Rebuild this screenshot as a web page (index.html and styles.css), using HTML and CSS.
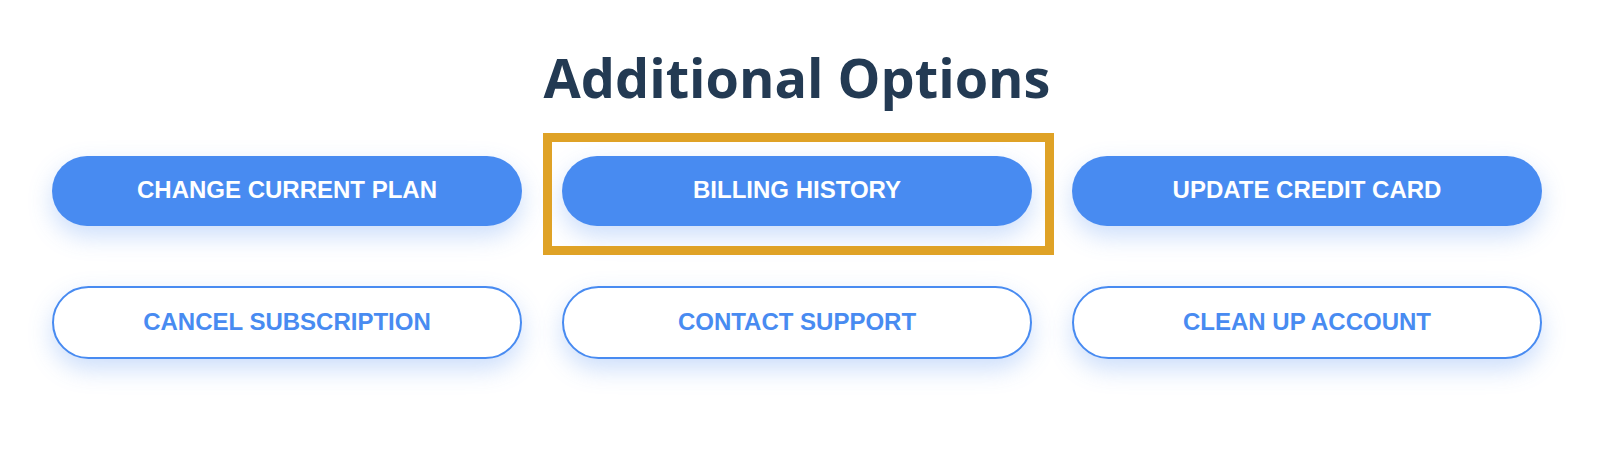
FILE: index.html
```html
<!DOCTYPE html>
<html>
<head>
    <title>Additional Options</title>
    <link rel="stylesheet" href="styles.css">
</head>
<body>
    <div class="options">
        <h1>Additional Options</h1>
        <div class="grid">
            <button class="btn btn-solid">Change Current Plan</button>
            <button class="btn btn-solid highlight">Billing History</button>
            <button class="btn btn-solid">Update Credit Card</button>
            <button class="btn btn-outline">Cancel Subscription</button>
            <button class="btn btn-outline">Contact Support</button>
            <button class="btn btn-outline">Clean Up Account</button>
        </div>
    </div>
</body>
</html>
```

FILE: styles.css
```css
body {
    margin: 0;
    padding: 0;
    background-color: #ffffff;
    font-family: 'Liberation Sans', Arial, sans-serif;
    min-height: 100vh;
}
.options {
    padding: 40px 68px 80px 52px;
}
.options h1 {
    font-family: 'Open Sans', 'Noto Sans', sans-serif;
    font-weight: 700;
    font-size: 54px;
    line-height: 74px;
    color: #233a53;
    text-align: center;
    margin: 0 0 42px 0;
}
.grid {
    display: grid;
    grid-template-columns: repeat(3, 470px);
    column-gap: 40px;
    row-gap: 60px;
}
.btn {
    display: flex;
    align-items: center;
    justify-content: center;
    box-sizing: border-box;
    border-radius: 40px;
    font-family: 'Liberation Sans', Arial, sans-serif;
    font-weight: 700;
    font-size: 24px;
    text-transform: uppercase;
    cursor: pointer;
    box-shadow: 0 10px 24px rgba(71, 138, 240, 0.28);
}
.btn-solid {
    height: 70px;
    border: none;
    background-color: #488bf1;
    color: #ffffff;
    padding: 0 0 2px 0;
}
.btn-outline {
    height: 73px;
    border: 2px solid #488bf1;
    background-color: #ffffff;
    color: #488bf1;
    padding: 0 0 1px 0;
}
.highlight {
    position: relative;
}
.highlight::after {
    content: '';
    position: absolute;
    top: -23px;
    left: -19px;
    right: -22px;
    bottom: -29px;
    border: 9px solid #dfa226;
    pointer-events: none;
}
```
